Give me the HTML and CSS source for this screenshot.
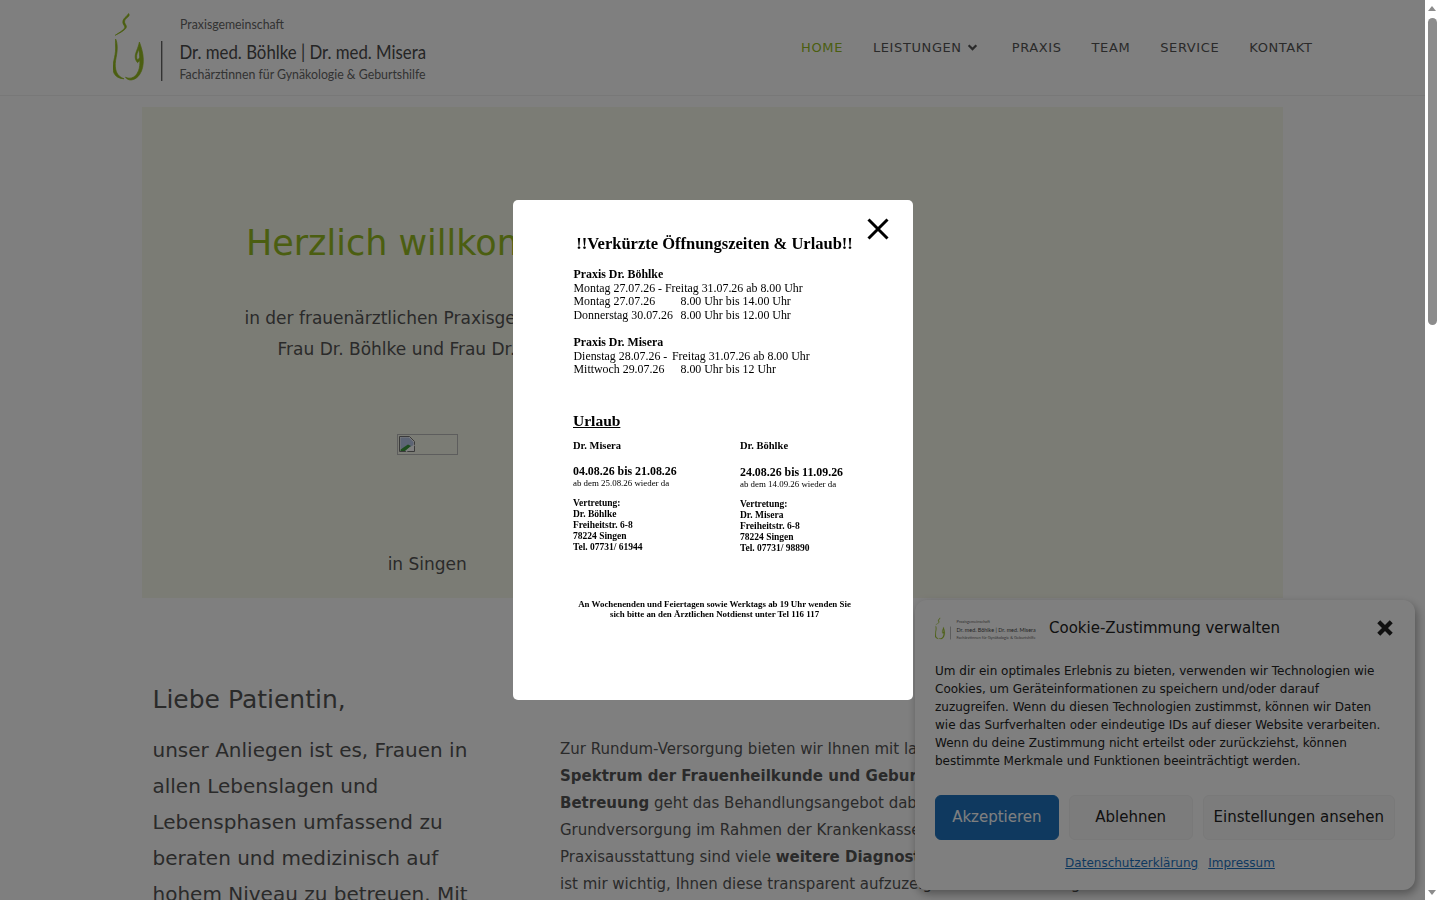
FILE: index.html
```html
<!DOCTYPE html>
<html lang="de">
<head>
<meta charset="utf-8">
<title>Praxisgemeinschaft Dr. med. Böhlke | Dr. med. Misera</title>
<link rel="stylesheet" href="styles.css">
</head>
<body>
<svg class="defs" width="0" height="0" aria-hidden="true">
  <symbol id="logo" viewBox="0 0 314 70">
    <path class="leaf" d="M15.600 1.500c1 1.200.6 2.600-.8 3.600-2.200 1.600-3.600 3.400-3.200 5.200.4 1.800 2 3.200 1.800 4.600-.3 2.200-4 4.800-11.200 8.400 5.200-3.400 9.400-5.900 9.600-8 .1-1.400-1.800-2.800-2-4.800-.2-2.600 1.800-4.800 3.600-6.200.8-.7 1.400-1.600 2.200-2.800z"/>
    <path class="leaf" d="M2.600 27c1 1.600 1.500 4.600 1.600 8 .2 5.200-1 9.400-1.600 13.400-.6 4-.5 8 .8 11.400 1.200 3.200 3.800 5.600 7.600 7-4.800-.2-8.400-2-10-5.600C-.6 57.800-.2 53.400.8 48.800c.9-4.200 1.900-8.400 1.800-12.800 0-3-.4-6 0-9z"/>
    <path class="leaf" d="M26.400 30c1.800 5 3.800 11 3.900 17.200.1 5.600-.7 11-3.600 15.200-2.200 3.200-5.200 5.400-8.600 5.600-2.400.1-4.200-.9-5.600-2.800 2 1 4 1.200 6 .7 3.200-.8 5.600-3.600 7-7.200 1.200-3.200 1.600-6.800 1.300-10.400-1 1.400-2 2.400-2.200 2.400-1.600-1.600-2.600-4-2.400-6.600.2-3.600 2.600-7 4.200-14.100zm-.6 7.400c-1.200 2.800-2.400 5.400-2.200 7.800.1 1 .4 2 .9 2.800 1-.8 1.600-1.700 2.200-2.800-.1-2.600-.4-5.200-.9-7.800z"/>
    <rect class="logo-rule" x="48" y="29" width="1.400" height="40"/>
    <text class="logo-small" x="67" y="16.500" textLength="104" lengthAdjust="spacingAndGlyphs">Praxisgemeinschaft</text>
    <text class="logo-name" x="66.500" y="47" textLength="246.500" lengthAdjust="spacingAndGlyphs">Dr. med. Böhlke | Dr. med. Misera</text>
    <text class="logo-sub" x="66.500" y="66.500" textLength="246" lengthAdjust="spacingAndGlyphs">Fachärztinnen für Gynäkologie &amp; Geburtshilfe</text>
  </symbol>
</svg>

<div class="page">
  <header class="site-header">
    <div class="header-inner">
      <a class="brand" href="#" aria-label="Startseite"><svg class="brand-logo"><use href="#logo"/></svg></a>
      <nav class="main-nav">
        <a class="nav-link is-active" href="#">Home</a>
        <a class="nav-link" href="#">Leistungen<svg class="chevron" viewBox="0 0 10 8"><path d="M1.500 2 5 5.500 8.500 2"/></svg></a>
        <a class="nav-link" href="#">Praxis</a>
        <a class="nav-link" href="#">Team</a>
        <a class="nav-link" href="#">Service</a>
        <a class="nav-link" href="#">Kontakt</a>
      </nav>
    </div>
  </header>

  <main class="content">
    <section class="hero">
      <div class="hero-col">
        <h1 class="hero-title">Herzlich willkommen</h1>
        <p class="hero-text">in der frauenärztlichen Praxisgemeinschaft<br>Frau Dr. Böhlke und Frau Dr. Misera</p>
        <div class="broken-image">
          <svg class="broken-icon" viewBox="0 0 16 16">
            <path class="bi-sheet" d="M.5.5h10l5 5v10H.5z"/>
            <path class="bi-sky" d="M1.500 1.500h8.500l4.500 4.500v4L1.500 13z"/>
            <path class="bi-hill" d="M1.500 15v-1.500L9 8.500l3 1.500L6 15z"/>
            <path class="bi-tear" d="M7 15.500 15.500 9"/>
          </svg>
        </div>
        <p class="hero-place">in Singen</p>
      </div>
    </section>

    <section class="intro">
      <div class="intro-left">
        <h2 class="intro-title">Liebe Patientin,</h2>
        <p class="intro-lead">unser Anliegen ist es, Frauen in allen Lebenslagen und Lebensphasen umfassend zu beraten und medizinisch auf hohem Niveau zu betreuen. Mit</p>
      </div>
      <div class="intro-right">
        <p>Zur Rundum-Versorgung bieten wir Ihnen mit langjähriger Erfahrung das gesamte<br>
        <strong>Spektrum der Frauenheilkunde und Geburtshilfe</strong> sowie eine umfassende<br>
        <strong>Betreuung</strong> geht das Behandlungsangebot dabei über die medizinische<br>
        Grundversorgung im Rahmen der Krankenkassenleistungen hinaus. Dank unserer<br>
        Praxisausstattung sind viele <strong>weitere Diagnostikmöglichkeiten</strong> vorhanden. Es<br>
        ist mir wichtig, Ihnen diese transparent aufzuzeigen und die Leistungen zu erläutern.</p>
      </div>
    </section>
  </main>

  <aside class="cookie">
    <div class="cookie-head">
      <svg class="cookie-logo"><use href="#logo"/></svg>
      <div class="cookie-title">Cookie-Zustimmung verwalten</div>
      <svg class="cookie-close" viewBox="0 0 16 16"><path d="M3 3l10 10M13 3 3 13"/></svg>
    </div>
    <p class="cookie-text">Um dir ein optimales Erlebnis zu bieten, verwenden wir Technologien wie Cookies, um Geräteinformationen zu speichern und/oder darauf zuzugreifen. Wenn du diesen Technologien zustimmst, können wir Daten wie das Surfverhalten oder eindeutige IDs auf dieser Website verarbeiten. Wenn du deine Zustimmung nicht erteilst oder zurückziehst, können bestimmte Merkmale und Funktionen beeinträchtigt werden.</p>
    <div class="cookie-actions">
      <button class="cookie-btn is-primary">Akzeptieren</button>
      <button class="cookie-btn">Ablehnen</button>
      <button class="cookie-btn">Einstellungen ansehen</button>
    </div>
    <div class="cookie-links">
      <a href="#">Datenschutzerklärung</a>
      <a href="#">Impressum</a>
    </div>
  </aside>

  <div class="overlay">
    <div class="modal">
      <svg class="modal-close" viewBox="0 0 22 22"><path d="M1.500 1.500l19 19M20.500 1.500l-19 19"/></svg>
      <div class="notice">
        <div class="notice-title">!!Verkürzte Öffnungszeiten &amp; Urlaub!!</div>

        <div class="hours">
          <div class="hours-head">Praxis Dr. Böhlke</div>
          <div>Montag 27.07.26 - Freitag 31.07.26 ab 8.00 Uhr</div>
          <div class="hours-row"><span class="hours-day">Montag 27.07.26</span><span>8.00 Uhr bis 14.00 Uhr</span></div>
          <div class="hours-row"><span class="hours-day">Donnerstag 30.07.26</span><span>8.00 Uhr bis 12.00 Uhr</span></div>
        </div>

        <div class="hours hours-second">
          <div class="hours-head">Praxis Dr. Misera</div>
          <div class="hours-row"><span class="hours-day hours-day-short">Dienstag 28.07.26 -</span><span>Freitag 31.07.26 ab 8.00 Uhr</span></div>
          <div class="hours-row"><span class="hours-day">Mittwoch 29.07.26</span><span>8.00 Uhr bis 12 Uhr</span></div>
        </div>

        <div class="leave-title">Urlaub</div>

        <div class="leave-grid">
          <div class="leave">
            <div class="leave-name">Dr. Misera</div>
            <div class="leave-date">04.08.26 bis 21.08.26</div>
            <div class="leave-back">ab dem 25.08.26 wieder da</div>
            <div class="leave-sub">Vertretung:<br>Dr. Böhlke<br>Freiheitstr. 6-8<br>78224 Singen<br>Tel. 07731/ 61944</div>
          </div>
          <div class="leave leave-right">
            <div class="leave-name">Dr. Böhlke</div>
            <div class="leave-date">24.08.26 bis 11.09.26</div>
            <div class="leave-back">ab dem 14.09.26 wieder da</div>
            <div class="leave-sub">Vertretung:<br>Dr. Misera<br>Freiheitstr. 6-8<br>78224 Singen<br>Tel. 07731/ 98890</div>
          </div>
        </div>

        <div class="notice-foot">An Wochenenden und Feiertagen sowie Werktags ab 19 Uhr wenden Sie<br>sich bitte an den Ärztlichen Notdienst unter Tel 116 117</div>
      </div>
    </div>
  </div>
</div>

<div class="scrollbar" aria-hidden="true">
  <span class="sb-up"></span>
  <span class="sb-thumb"></span>
  <span class="sb-down"></span>
</div>
</body>
</html>
```

FILE: styles.css
```css
* { box-sizing: border-box; }

html, body {
  margin: 0;
  height: 900px;
  overflow: hidden;
}

body {
  display: flex;
  background: #fff;
  color: #555;
  font-family: "DejaVu Sans", sans-serif;
  font-size: 16px;
}

.defs { position: absolute; }

.page {
  position: relative;
  flex: 1 1 auto;
  height: 900px;
  overflow: hidden;
  background: #fff;
}

/* Header */
.site-header {
  height: 96px;
  border-bottom: 1px solid #f1f1f1;
}

.header-inner {
  display: flex;
  justify-content: space-between;
  align-items: center;
  width: 1200px;
  height: 95px;
  margin: 0 auto;
}

.brand { display: block; height: 70px; margin-top: -1px; }
.brand-logo { display: block; width: 314px; height: 70px; }

.leaf { fill: #96bd22; stroke: #96bd22; stroke-width: .7; }
.logo-rule { fill: #666; }
.logo-small, .logo-sub, .logo-name { font-family: "Lato", sans-serif; fill: #666; }
.logo-small { font-size: 13px; }
.logo-name { font-size: 19px; fill: #4a4a4a; }
.logo-sub { font-size: 13.500px; }

.main-nav { display: flex; align-items: center; }

.nav-link {
  display: flex;
  align-items: center;
  padding: 0 15px;
  color: #555;
  font-size: 13px;
  letter-spacing: .6px;
  text-transform: uppercase;
  text-decoration: none;
}
.nav-link:last-child { padding-right: 0; }
.nav-link.is-active { color: #96bd22; }

.chevron {
  width: 11px;
  height: 9px;
  margin-left: 5px;
  margin-right: 4px;
  fill: none;
  stroke: #555;
  stroke-width: 2;
}

/* Content */
.content {
  width: 1141px;
  margin: 11px auto 0;
}

.hero {
  display: grid;
  grid-template-columns: 1fr 1fr;
  height: 491px;
  padding-top: 116px;
  background: #f7f8ea;
}

.hero-col { text-align: center; }

.hero-title {
  margin: 0 0 39.500px;
  color: #96bd22;
  font-size: 35px;
  font-weight: 400;
  line-height: 40px;
}

.hero-text {
  margin: 0;
  font-size: 17px;
  line-height: 31px;
}

.broken-image {
  display: flex;
  width: 61px;
  height: 21px;
  margin: 69.500px auto 93.500px;
  padding: 1px;
  border: 1px solid #bbb;
}

.broken-icon { width: 16px; height: 16px; }
.bi-sheet { fill: #fff; stroke: #777; stroke-width: 1; }
.bi-sky { fill: #b8c8e8; }
.bi-hill { fill: #3d9a3d; }
.bi-tear { stroke: #fff; stroke-width: 1.500; fill: none; }

.hero-place {
  margin: 0;
  font-size: 17px;
  line-height: 31px;
}

.intro {
  display: grid;
  grid-template-columns: 407.5px 1fr;
  padding-left: 10.5px;
}

.intro-left { padding-top: 87px; padding-right: 80px; }

.intro-title {
  margin: 0 0 17px;
  font-size: 25px;
  font-weight: 400;
  line-height: 30px;
}

.intro-lead {
  margin: 0;
  font-size: 20px;
  line-height: 36px;
}

.intro-right {
  padding-top: 138px;
  font-size: 15px;
  line-height: 27px;
  white-space: nowrap;
}
.intro-right p { margin: 0; }

/* Cookie panel */
.cookie {
  position: absolute;
  right: 10px;
  bottom: 10px;
  width: 500px;
  height: 290px;
  padding: 16px 20px 0;
  background: #fff;
  border-radius: 12px;
  box-shadow: 2px 4px 10px rgba(0, 0, 0, .35);
  color: #222;
}

.cookie-head {
  display: flex;
  align-items: center;
  height: 23px;
}

.cookie-logo { width: 101px; height: 23px; flex: none; margin-top: 2px; }

.cookie-title {
  flex: 1;
  margin-left: 13px;
  font-size: 15px;
  color: #222;
}

.cookie-close {
  width: 20px;
  height: 20px;
  fill: none;
  stroke: #222;
  stroke-width: 3.400;
}

.cookie-text {
  margin: 23px 0 0;
  font-size: 12px;
  line-height: 18px;
}

.cookie-actions {
  display: grid;
  grid-template-columns: 1fr 1fr auto;
  gap: 10px;
  margin-top: 25px;
}

.cookie-btn {
  height: 45px;
  padding: 0 10px 2px;
  border: 1px solid #f2f2f2;
  border-radius: 6px;
  background: #f9f9f9;
  color: #222;
  font-family: inherit;
  font-size: 15px;
}

.cookie-btn.is-primary {
  border-color: #1e73be;
  background: #1e73be;
  color: #fff;
}

.cookie-links {
  display: flex;
  justify-content: center;
  gap: 10px;
  margin-top: 15px;
  padding-left: 10px;
  font-size: 12px;
  line-height: 16px;
}
.cookie-links a { color: #1e73be; text-decoration: underline; }

/* Modal */
.overlay {
  position: absolute;
  inset: 0;
  display: flex;
  align-items: center;
  justify-content: center;
  background: rgba(0, 0, 0, .5);
}

.modal {
  position: relative;
  width: 400px;
  height: 500px;
  padding: 34px 0 0 60.5px;
  border-radius: 5px;
  background: #fff;
  color: #000;
  font-family: "Liberation Serif", serif;
}

.modal-close {
  position: absolute;
  top: 18px;
  right: 24px;
  width: 22px;
  height: 22px;
  fill: none;
  stroke: #000;
  stroke-width: 3;
}

.notice { width: 283px; filter: blur(.3px); }

.notice-title {
  font-size: 16.500px;
  font-weight: 700;
  line-height: 20px;
  text-align: center;
  white-space: nowrap;
}

.hours {
  margin-top: 14px;
  padding-left: .5px;
  font-size: 11.900px;
  line-height: 13.700px;
  white-space: nowrap;
}
.hours-second { margin-top: 13px; }
.hours-head { font-weight: 700; }
.hours-row { display: flex; }
.hours-day { width: 107px; flex: none; }
.hours-day-short { width: 98.500px; }

.leave-title {
  margin-top: 34px;
  font-size: 15.500px;
  font-weight: 700;
  line-height: 20px;
  text-decoration: underline;
}

.leave-grid {
  display: grid;
  grid-template-columns: 167px 1fr;
  margin-top: 8px;
  white-space: nowrap;
}
.leave-right { margin-top: .5px; }

.leave-name {
  font-size: 10.500px;
  font-weight: 700;
  line-height: 13px;
}
.leave-date {
  margin-top: 12.500px;
  font-size: 11.900px;
  font-weight: 700;
  line-height: 14px;
}
.leave-back {
  font-size: 8.900px;
  line-height: 11px;
}
.leave-sub {
  margin-top: 9px;
  font-size: 9.500px;
  font-weight: 700;
  line-height: 11px;
}

.notice-foot {
  margin-top: 45px;
  font-size: 8.900px;
  font-weight: 700;
  line-height: 10.500px;
  text-align: center;
  white-space: nowrap;
}

/* Scrollbar */
.scrollbar {
  position: relative;
  flex: 0 0 15px;
  height: 900px;
  background: #fff;
}
.sb-thumb {
  display: block;
  width: 9px;
  height: 307px;
  margin: 18px 0 0 3px;
  border-radius: 5px;
  background: #8c8c8c;
}
.sb-up, .sb-down {
  position: absolute;
  left: 3px;
  width: 0;
  height: 0;
  border-left: 4.500px solid transparent;
  border-right: 4.500px solid transparent;
}
.sb-up { top: 6px; border-bottom: 5px solid #8c8c8c; }
.sb-down { bottom: 5px; border-top: 5px solid #8c8c8c; }
```
